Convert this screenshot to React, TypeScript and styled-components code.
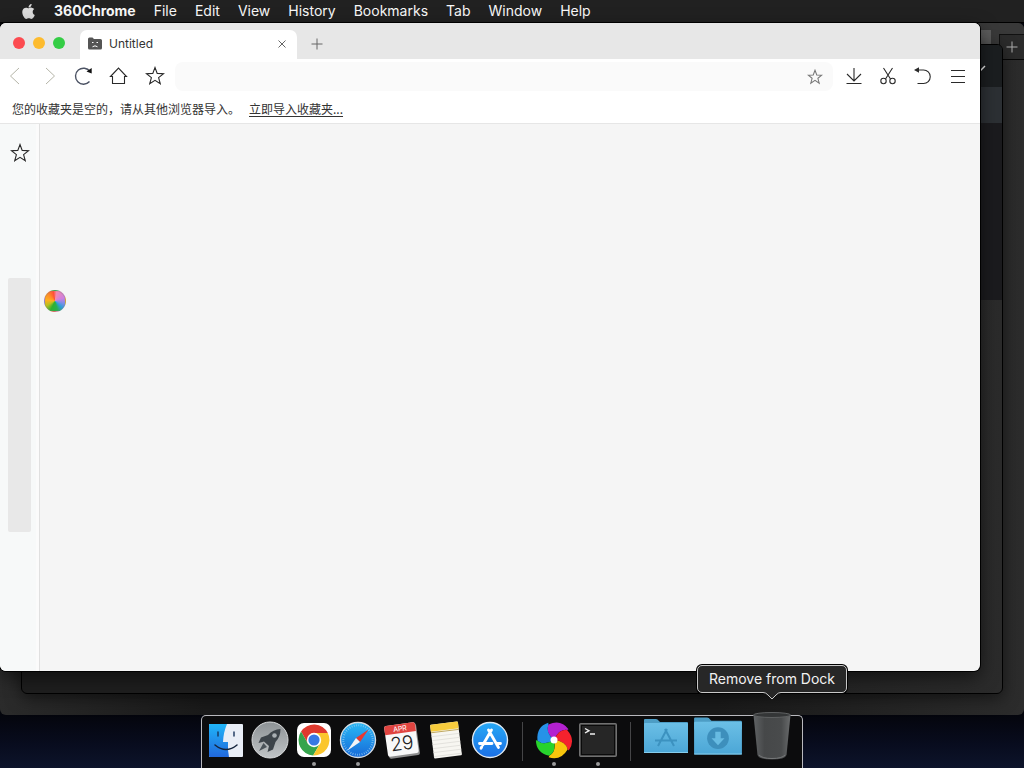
import React from "react";
import styled, { createGlobalStyle, css } from "styled-components";
import { FaApple } from "react-icons/fa";

const GlobalStyle = createGlobalStyle`
  *, *::before, *::after { box-sizing: border-box; }
  html, body, #root { height: 100%; }
  body {
    margin: 0;
    overflow: hidden;
    font-family: Inter, "Noto Sans CJK SC", sans-serif;
    background: #0b0f22;
  }
  button, input { font: inherit; color: inherit; }
  button { padding: 0; border: 0; background: none; }
  svg { display: block; }
`;

const Desktop = styled.div`
  position: relative;
  height: 100%;
  min-height: 480px;
  display: flex;
  flex-direction: column;
  overflow: hidden;
  background: linear-gradient(#04050c calc(100% - 54px), #080c1e calc(100% - 24px), #0d142b);
`;

/* Menu bar */
const MenuBar = styled.nav`
  height: 23px;
  display: flex;
  align-items: center;
  gap: 18px;
  padding: 0 20px;
  background: #212121;
  border-bottom: 1px solid #000;
  color: #f8f8f8;
  flex-shrink: 0;
`;

const MenuItem = styled.button<{ $strong?: boolean }>`
  font-size: 14px;
  line-height: 22px;
  font-weight: ${(p) => (p.$strong ? 700 : 400)};
  white-space: nowrap;
`;

const AppleMenu = styled(MenuItem)`
  display: grid;
  place-items: center;
  width: 16px;
  color: #dcdcdc;
`;

/* Windows on the desktop */
const Workspace = styled.main`
  position: relative;
  flex: 1;
`;

const WindowFrame = styled.section<{ $top: number; $right: number; $bottom: number; $left: number }>`
  position: absolute;
  top: ${(p) => p.$top}px;
  right: ${(p) => p.$right}px;
  bottom: ${(p) => p.$bottom}px;
  left: ${(p) => p.$left}px;
  display: flex;
  flex-direction: column;
  overflow: hidden;
`;

const RearWindow = styled(WindowFrame)`
  border-radius: 6px;
  background: linear-gradient(90deg, #2b2b2b, #1a1a1a 20%, #1a1a1a 70%, #2c2c2c);
`;

const RearTabStrip = styled.div`
  height: 37px;
  display: flex;
  justify-content: flex-end;
  align-items: flex-end;
  background: #393939;
  border-bottom: 1px solid #050505;
`;

const RearTab = styled.div`
  width: 200px;
  height: 29px;
  margin-right: 8px;
  background: #5c5c5c;
`;

const RearNewTab = styled.button`
  width: 25px;
  height: 25px;
  display: grid;
  place-items: center;
  border: 1px solid #111;
  border-width: 1px 0 0 1px;
  background: #2b2b2b;
  color: #b0b0b0;
`;

const MiddleWindow = styled(WindowFrame)`
  border: 1px solid #000;
  border-radius: 6px;
  background: linear-gradient(90deg, #1e1e1e 70%, #2b2b2b);
  box-shadow: 0 4px 16px rgba(0, 0, 0, 0.5);
`;

const MiddleBand = styled.div<{ $height: number; $color: string }>`
  height: ${(p) => p.$height}px;
  display: flex;
  justify-content: flex-end;
  align-items: center;
  padding-right: 15px;
  background: ${(p) => p.$color};
  color: #e8e8e8;
`;

const BrowserWindow = styled(WindowFrame)`
  border-radius: 6px;
  background: #f5f5f5;
  color: #333;
  box-shadow: 0 0 0 1px #000, 0 6px 18px rgba(0, 0, 0, 0.55);
`;

const TabStrip = styled.header`
  height: 36px;
  display: flex;
  align-items: flex-end;
  background: #e7e7e7;
  flex-shrink: 0;
`;

const TrafficLights = styled.div`
  display: flex;
  gap: 8px;
  padding: 0 15px 10px 13px;
`;

const Light = styled.button<{ $color: string }>`
  width: 12px;
  height: 12px;
  border-radius: 50%;
  background: ${(p) => p.$color};
`;

const Tab = styled.div`
  width: 217px;
  height: 29px;
  display: flex;
  align-items: center;
  gap: 7px;
  padding: 0 8px 2px;
  border-radius: 7px 7px 0 0;
  background: #fff;
  font-size: 12px;
  line-height: 16px;
`;

const TabTitle = styled.span`
  flex: 1;
`;

const TabButton = styled.button`
  width: 14px;
  height: 26px;
  display: grid;
  place-items: center;
  color: #666;
`;

const NewTabButton = styled(TabButton)`
  width: 40px;
  height: 30px;
`;

const Toolbar = styled.div`
  height: 35px;
  display: flex;
  align-items: center;
  padding-right: 9px;
  background: #fff;
  flex-shrink: 0;
`;

const ToolGroup = styled.div<{ $gap: number }>`
  display: flex;
  gap: ${(p) => p.$gap}px;
  padding-bottom: 2px;
`;

const ToolButton = styled.button<{ $tone?: string }>`
  width: 30px;
  height: 28px;
  display: grid;
  place-items: center;
  color: ${(p) => p.$tone ?? "#2a2a2a"};
`;

const AddressField = styled.div`
  flex: 1;
  height: 29px;
  display: flex;
  align-items: center;
  margin: 0 6px 0 5px;
  padding-right: 3px;
  border-radius: 8px;
  background: #fafafa;
`;

const AddressInput = styled.input`
  flex: 1;
  min-width: 0;
  padding: 0 12px;
  border: 0;
  outline: 0;
  background: transparent;
  font-size: 12px;
`;

const BookmarksBar = styled.div`
  height: 30px;
  display: flex;
  align-items: center;
  gap: 9px;
  padding: 0 12px;
  background: #fff;
  border-bottom: 1px solid #e6e6e6;
  font-family: "Noto Sans CJK SC", sans-serif;
  font-size: 12px;
  line-height: 18px;
  flex-shrink: 0;

  a {
    color: inherit;
    text-underline-offset: 2px;
  }
`;

const Content = styled.div`
  flex: 1;
  display: flex;
  min-height: 0;
`;

const Sidebar = styled.aside`
  width: 40px;
  display: flex;
  flex-direction: column;
  align-items: center;
  padding: 15px 0 0;
  background: linear-gradient(90deg, #f7f9f9 36px, #fbfbfb 36px);
  border-right: 1px solid #e0e0e0;
`;

const SidebarHandle = styled.div`
  width: 23px;
  height: 254px;
  margin-top: 111px;
  border-radius: 2px;
  background: #e8e8e8;
`;

const Page = styled.div`
  flex: 1;
  padding: 166px 4px 4px;
`;

const BusyWheel = styled.div`
  width: 22px;
  height: 22px;
  border-radius: 50%;
  border: 1px solid rgba(120, 120, 120, 0.3);
  background: conic-gradient(
    from 10deg,
    #f28bb0, #d07fe0 60deg, #7f8ee8 95deg, #2f9fd8 125deg,
    #28b050 155deg, #30b030 195deg, #b8c020 230deg, #ffb020 265deg,
    #ff8a28 305deg, #ff5038 340deg, #f28bb0
  );
`;

/* Dock */
const DockLayer = styled.footer`
  position: absolute;
  left: 0;
  right: 20px;
  bottom: 0;
  display: flex;
  justify-content: center;
  pointer-events: none;
`;

const Dock = styled.div`
  height: 53px;
  display: flex;
  align-items: flex-start;
  padding: 0 2px;
  border: 1px solid #b9b9be;
  border-bottom: 0;
  border-radius: 5px 5px 0 0;
  background: #0c0c0d;
`;

const DockItem = styled.button<{ $wide?: boolean; $running?: boolean }>`
  position: relative;
  width: ${(p) => (p.$wide ? 52 : 44)}px;
  height: ${(p) => (p.$wide ? 40 : 48)}px;
  display: flex;
  align-items: center;
  justify-content: center;
  ${(p) => p.$running && css`
    &::after {
      content: "";
      position: absolute;
      left: 50%;
      bottom: -2px;
      width: 4px;
      height: 4px;
      margin-left: -2px;
      border-radius: 50%;
      background: #9a9a9a;
    }
  `}
`;

const DockDivider = styled.div`
  width: 1px;
  height: 39px;
  margin: 6px 9px 0 10px;
  background: #454547;
`;

const TrashItem = styled(DockItem)`
  width: 56px;
`;

const Tooltip = styled.span`
  position: absolute;
  left: 50%;
  bottom: 63px;
  transform: translateX(-50%);
  width: 150px;
  height: 28px;
  border: 1px solid #c8c8c8;
  border-radius: 5px;
  background: #272727;
  box-shadow: 0 0 0 1px #000;
  color: #f2f2f2;
  font-size: 14px;
  line-height: 26px;
  text-align: center;
  white-space: nowrap;
`;

const TooltipTail = styled.svg`
  position: absolute;
  left: 50%;
  top: 25px;
  margin-left: -9px;
`;

const starPath = "M10 1.5L12.2 7.4L18.5 7.7L13.6 11.6L15.3 17.8L10 14.3L4.7 17.8L6.4 11.6L1.5 7.7L7.8 7.4Z";

const StarIcon = ({ size = 20, width = 1.1 }: { size?: number; width?: number }) => (
  <svg width={size} height={size} viewBox="0 0 20 20" fill="none" stroke="currentColor" strokeWidth={width}>
    <path d={starPath} />
  </svg>
);

const LineIcon = ({ d, width = 1.1, children }: { d: string; width?: number; children?: React.ReactNode }) => (
  <svg width="24" height="24" viewBox="0 0 24 24" fill="none" stroke="currentColor" strokeWidth={width}>
    <path d={d} />
    {children}
  </svg>
);

const SadFolderIcon = () => (
  <svg width="14" height="13" viewBox="0 0 14 13">
    <path d="M0 2Q0 .5 1.5.5H4.5L6 2H12.5Q14 2 14 3.5V11Q14 12.5 12.5 12.5H1.5Q0 12.5 0 11Z" fill="#555" />
    <path d="M4 5.5H5.500M8.500 5.500H10M4.500 9.800Q7 7.800 9.500 9.800" fill="none" stroke="#fff" />
  </svg>
);

const PlusIcon = ({ size }: { size: number }) => (
  <svg width={size} height={size} viewBox="0 0 12 12" fill="none" stroke="currentColor">
    <path d="M6 .5V11.5M.5 6H11.5" />
  </svg>
);

const FinderIcon = () => (
  <svg width="36" height="36" viewBox="0 0 36 36">
    <defs>
      <linearGradient id="finderBlue" x2="0" y2="1">
        <stop stopColor="#20b5f8" />
        <stop offset="1" stopColor="#2168dc" />
      </linearGradient>
    </defs>
    <rect x="1" y="2" width="34" height="33" rx="1" fill="#e9eef6" />
    <path d="M1 3Q1 2 2 2H19Q15.5 10 15 20H20Q19.5 28 21 35H2Q1 35 1 34Z" fill="url(#finderBlue)" />
    <path d="M10 10V14M26 10V14" stroke="#17345b" strokeWidth="1.4" strokeLinecap="round" />
    <path d="M7 23Q18 32 29 23" stroke="#14243c" strokeWidth="1.5" fill="none" strokeLinecap="round" />
  </svg>
);

const LaunchpadIcon = () => (
  <svg width="38" height="38" viewBox="0 0 38 38">
    <defs>
      <linearGradient id="launchGray" x2="0" y2="1">
        <stop stopColor="#8d9295" />
        <stop offset="1" stopColor="#c0c4c6" />
      </linearGradient>
    </defs>
    <circle cx="19" cy="19" r="18" fill="url(#launchGray)" stroke="#d8dadb" />
    <path d="M29.500 8Q22 8.500 17 14L10 16.500L7.500 22L13 20.500L18 25L16.500 31L22 28.500L24.500 21Q29.500 16 29.500 8Z" fill="#3d444a" />
    <path d="M12.500 22L8 30L16 26Z" fill="#4b5359" />
    <circle cx="23.500" cy="14.500" r="2.300" fill="#a9afb3" />
  </svg>
);

const ChromeIcon = () => (
  <svg width="36" height="36" viewBox="0 0 36 36">
    <rect x="1" y="1" width="34" height="34" rx="7" fill="#fff" />
    <path d="M31.800 11A15.500 15.500 0 0 0 5.040 9.550L11.940 21.500L18 11Z" fill="#df392e" />
    <path d="M5.040 9.550A15.500 15.500 0 0 0 17.160 33.450L24.060 21.500H11.940Z" fill="#35a44c" />
    <path d="M17.160 33.450A15.500 15.500 0 0 0 31.800 11H18L24.060 21.500Z" fill="#fbc62d" />
    <circle cx="18" cy="18" r="7.200" fill="#fff" />
    <circle cx="18" cy="18" r="5.600" fill="#3779e4" />
  </svg>
);

const SafariIcon = () => (
  <svg width="38" height="38" viewBox="0 0 38 38">
    <defs>
      <linearGradient id="safariBlue" x2="0" y2="1">
        <stop stopColor="#28b9f5" />
        <stop offset="1" stopColor="#1769d8" />
      </linearGradient>
    </defs>
    <circle cx="19" cy="19" r="17.500" fill="url(#safariBlue)" stroke="#d5dce2" strokeWidth="1.400" />
    <circle cx="19" cy="19" r="14.700" fill="none" stroke="#8ccaf2" strokeWidth="2" strokeDasharray=".7 1.610" />
    <path d="M29.500 8.500L17 17L21 21Z" fill="#e8382f" />
    <path d="M8.500 29.500L17 17L21 21Z" fill="#f2f4f6" />
  </svg>
);

const CalendarIcon = () => (
  <svg width="38" height="38" viewBox="0 0 38 38">
    <g transform="rotate(-8 19 19)">
      <rect x="4" y="4" width="31" height="32" rx="2" fill="#8d8d8d" />
      <rect x="3" y="3" width="31" height="31" rx="2" fill="#f8f8f8" />
      <path d="M3 5Q3 3 5 3H32Q34 3 34 5V12H3Z" fill="#e04440" />
      <text x="18.500" y="10" fontFamily="Inter, sans-serif" fontSize="7" fill="#fff" textAnchor="middle">APR</text>
      <text x="18.500" y="29" fontFamily="Inter, sans-serif" fontSize="19" fontWeight="300" fill="#222" textAnchor="middle">29</text>
    </g>
  </svg>
);

const NotesIcon = () => (
  <svg width="38" height="38" viewBox="0 0 38 38">
    <g transform="rotate(-7 19 19)">
      <rect x="5" y="2" width="28" height="34" rx="1" fill="#f7f6f1" />
      <path d="M5 3Q5 2 6 2H32Q33 2 33 3V9H5Z" fill="#f7cc3d" />
      <path d="M5 10H33" stroke="#b59a45" strokeWidth=".8" />
      <path d="M5 14H33M5 18H33M5 22H33M5 26H33M5 30H33M5 34H33" stroke="#dfded9" strokeWidth=".8" />
    </g>
  </svg>
);

const AppStoreIcon = () => (
  <svg width="38" height="38" viewBox="0 0 38 38">
    <defs>
      <linearGradient id="storeBlue" x2="0" y2="1">
        <stop stopColor="#27a9f5" />
        <stop offset="1" stopColor="#1a6fe6" />
      </linearGradient>
    </defs>
    <circle cx="19" cy="19" r="17.500" fill="url(#storeBlue)" stroke="#e1eaf2" strokeWidth="1.400" />
    <path d="M20.500 9L11.800 24M17.500 9L27.500 26.500M8.500 22.500H21M25.500 22.500H29.500M10.700 26L10 27.200" fill="none" stroke="#fff" strokeWidth="2.800" strokeLinecap="round" />
  </svg>
);

const blades = ["#b321cf", "#f5222d", "#f8c50c", "#27d32c", "#2692e8"];

const PinwheelIcon = () => (
  <svg width="38" height="38" viewBox="-1 -1 38 38">
    {blades.map((color, i) => (
      <path key={color} transform={`rotate(${i * 72} 18 18)`} fill={color}
        d="M18 18Q9 10 12.500 2.400Q25 -3 32.500 7.200L31.100 7.950Q22.800 7 18 18Z" />
    ))}
    <circle cx="18" cy="18" r="3.500" fill="#fff" />
  </svg>
);

const TerminalIcon = () => (
  <svg width="38" height="34" viewBox="0 0 38 34">
    <rect x=".75" y=".750" width="36.500" height="32.500" rx="1" fill="#252525" stroke="#717171" strokeWidth="1.500" />
    <rect x="2.500" y="2.500" width="33" height="29" fill="#262626" stroke="#0a0a0a" />
    <path d="M6 5.500L10 7.700L6 10M11 11H16" fill="none" stroke="#f0f0f0" strokeWidth="1.400" />
  </svg>
);

const FolderIcon = ({ large, children }: { large?: boolean; children: React.ReactNode }) => (
  <svg width={large ? 50 : 46} height={large ? 40 : 36} viewBox="0 0 46 36">
    <defs>
      <linearGradient id="folderBlue" x2="0" y2="1">
        <stop stopColor="#6bbfe6" />
        <stop offset="1" stopColor="#4ba6d6" />
      </linearGradient>
    </defs>
    <path d="M1 2Q1 1 2 1H13Q14.500 1 16 3L17 4H44Q45 4 45 5V12H1Z" fill="#4d9dc5" />
    <path d="M1 6Q1 5 2 5H44Q45 5 45 6V34Q45 35 44 35H2Q1 35 1 34Z" fill="url(#folderBlue)" />
    <path d="M1 34.500H45" stroke="#86cdec" />
    {children}
  </svg>
);

const TrashIcon = () => (
  <svg width="40" height="49" viewBox="0 0 40 49">
    <defs>
      <linearGradient id="trashBody">
        <stop stopColor="#606365" />
        <stop offset=".3" stopColor="#464849" />
        <stop offset=".75" stopColor="#494b4c" />
        <stop offset="1" stopColor="#696b6c" />
      </linearGradient>
    </defs>
    <path d="M1.500 3L5.500 43Q7 47.500 20 47.500Q33 47.500 34.500 43L38.500 3Z" fill="url(#trashBody)" />
    <ellipse cx="20" cy="3" rx="18.500" ry="2.500" fill="#343637" stroke="#606263" />
    <path d="M7 43Q10 46.500 20 46.500Q30 46.500 33 43" fill="none" stroke="#77797a" />
  </svg>
);

const menus = ["File", "Edit", "View", "History", "Bookmarks", "Tab", "Window", "Help"];

export default function App() {
  return (
    <>
      <GlobalStyle />
      <Desktop>
        <MenuBar aria-label="Menu bar">
          <AppleMenu aria-label="Apple"><FaApple size={17} /></AppleMenu>
          <MenuItem $strong>360Chrome</MenuItem>
          {menus.map((name) => <MenuItem key={name}>{name}</MenuItem>)}
        </MenuBar>

        <Workspace>
          <RearWindow $top={0} $right={0} $bottom={53} $left={0}>
            <RearTabStrip>
              <RearTab />
              <RearNewTab aria-label="New tab"><PlusIcon size={12} /></RearNewTab>
            </RearTabStrip>
          </RearWindow>

          <MiddleWindow $top={21} $right={21} $bottom={74} $left={21}>
            <MiddleBand $height={42} $color="#1b1e20">
              <svg width="8" height="10" viewBox="0 0 8 10" stroke="currentColor" strokeWidth="1.5"><path d="M1 10L6 5" /></svg>
            </MiddleBand>
            <MiddleBand $height={36} $color="#2c3034" />
            <MiddleBand $height={177} $color="#1b1b1e" />
          </MiddleWindow>

          <BrowserWindow $top={0} $right={44} $bottom={97} $left={0}>
            <TabStrip>
              <TrafficLights>
                <Light $color="#fc4b50" aria-label="Close window" />
                <Light $color="#fdbb2e" aria-label="Minimize window" />
                <Light $color="#34cd45" aria-label="Zoom window" />
              </TrafficLights>
              <Tab>
                <SadFolderIcon />
                <TabTitle>Untitled</TabTitle>
                <TabButton aria-label="Close tab">
                  <svg width="8" height="8" viewBox="0 0 8 8" stroke="currentColor"><path d="M.5 .5L7.500 7.500M7.500 .5L.5 7.500" /></svg>
                </TabButton>
              </Tab>
              <NewTabButton aria-label="New tab"><PlusIcon size={12} /></NewTabButton>
            </TabStrip>

            <Toolbar>
              <ToolGroup $gap={5}>
                <ToolButton $tone="#b5b5a8" aria-label="Back"><LineIcon d="M16 4L7.500 12L16 20" width={1} /></ToolButton>
                <ToolButton $tone="#b5b5a8" aria-label="Forward"><LineIcon d="M8 4L16.500 12L8 20" width={1} /></ToolButton>
                <ToolButton $tone="#4c5364" aria-label="Reload">
                  <LineIcon d="M17 7.500A8 8 0 1 0 16.500 17.500" width={1.400}>
                    <path d="M18.700 4V9.500L13.500 7.500Z" fill="#111" stroke="none" />
                  </LineIcon>
                </ToolButton>
                <ToolButton aria-label="Home"><LineIcon d="M2.500 12.500L10.500 4L18.500 12.500H16.500V19.500H4.500V12.500Z" /></ToolButton>
                <ToolButton aria-label="Favorites"><StarIcon /></ToolButton>
              </ToolGroup>
              <AddressField>
                <AddressInput type="text" aria-label="Address" />
                <ToolButton $tone="#777" aria-label="Add to favorites"><StarIcon size={16} width={1.300} /></ToolButton>
              </AddressField>
              <ToolGroup $gap={4}>
                <ToolButton aria-label="Downloads"><LineIcon d="M12 4V17M5 10L12 17L19 10M4.500 19.500H19.500" /></ToolButton>
                <ToolButton aria-label="Screenshot">
                  <LineIcon d="M7.500 4L14.500 15M16.500 4L9.500 15">
                    <circle cx="7.500" cy="17" r="2.700" />
                    <circle cx="16.500" cy="17" r="2.700" />
                  </LineIcon>
                </ToolButton>
                <ToolButton aria-label="Restore closed tab">
                  <LineIcon d="M7 6H13.500A6.700 6.700 0 0 1 13.500 19.500H7.500">
                    <path d="M4 6L9 3.300V8.700Z" fill="currentColor" stroke="none" />
                  </LineIcon>
                </ToolButton>
                <ToolButton aria-label="Menu"><LineIcon d="M7 6.500H21M7 12.500H21M7 18.500H21" /></ToolButton>
              </ToolGroup>
            </Toolbar>

            <BookmarksBar>
              <span>您的收藏夹是空的，请从其他浏览器导入。</span>
              <a href="#import">立即导入收藏夹...</a>
            </BookmarksBar>

            <Content>
              <Sidebar>
                <ToolButton aria-label="Favorites panel"><StarIcon /></ToolButton>
                <SidebarHandle />
              </Sidebar>
              <Page><BusyWheel role="progressbar" aria-label="Loading" /></Page>
            </Content>
          </BrowserWindow>
        </Workspace>

        <DockLayer>
          <Dock>
            <DockItem aria-label="Finder"><FinderIcon /></DockItem>
            <DockItem aria-label="Launchpad"><LaunchpadIcon /></DockItem>
            <DockItem $running aria-label="Chrome"><ChromeIcon /></DockItem>
            <DockItem $running aria-label="Safari"><SafariIcon /></DockItem>
            <DockItem aria-label="Calendar"><CalendarIcon /></DockItem>
            <DockItem aria-label="Notes"><NotesIcon /></DockItem>
            <DockItem aria-label="App Store"><AppStoreIcon /></DockItem>
            <DockDivider />
            <DockItem $running aria-label="360Chrome"><PinwheelIcon /></DockItem>
            <DockItem $running aria-label="Terminal"><TerminalIcon /></DockItem>
            <DockDivider />
            <DockItem $wide aria-label="Applications">
              <FolderIcon>
                <path d="M24 11L15 28M22 11L31 28M12 22.500H34" fill="none" stroke="#3c92c0" strokeWidth="2" />
              </FolderIcon>
            </DockItem>
            <DockItem $wide aria-label="Downloads folder">
              <FolderIcon large>
                <circle cx="23" cy="20" r="10" fill="#3d8fbc" />
                <path d="M20.500 14H25.500V20H29L23 26.500L17 20H20.500Z" fill="#67bbe2" />
              </FolderIcon>
            </DockItem>
            <TrashItem $wide aria-label="Trash">
              <TrashIcon />
              <Tooltip role="tooltip">
                Remove from Dock
                <TooltipTail width="18" height="9" viewBox="0 0 18 9">
                  <path d="M0 0H18V1.500Q15 1.500 13 4L9 8L5 4Q3 1.500 0 1.500Z" fill="#272727" />
                  <path d="M0 1.500Q3 1.500 5 4L9 8L13 4Q15 1.500 18 1.500" fill="none" stroke="#c8c8c8" />
                </TooltipTail>
              </Tooltip>
            </TrashItem>
          </Dock>
        </DockLayer>
      </Desktop>
    </>
  );
}
